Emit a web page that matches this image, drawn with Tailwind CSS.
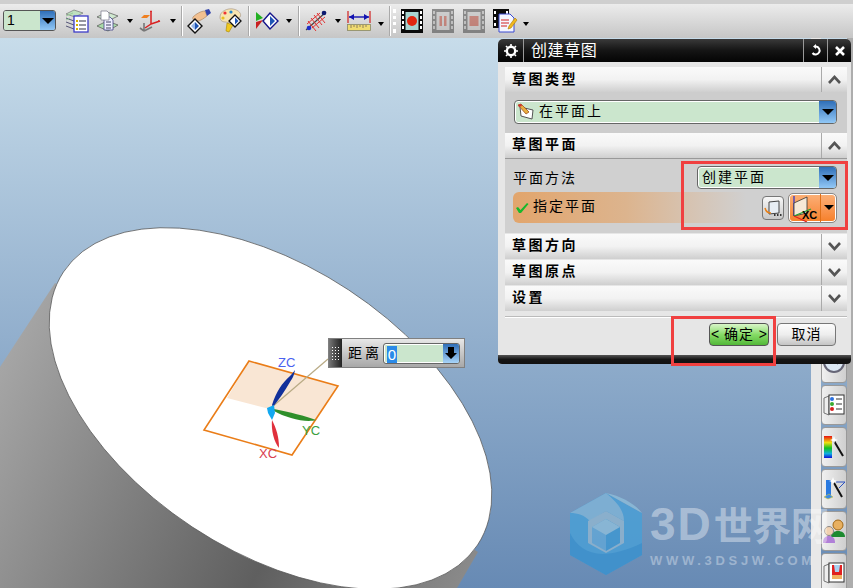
<!DOCTYPE html>
<html lang="zh-CN">
<head>
    <meta charset="UTF-8">
    <meta name="viewport" content="width=device-width, initial-scale=1.0">
    <title>创建草图</title>
    <script src="https://cdn.jsdelivr.net/npm/@tailwindcss/browser@4"></script>
</head>
<body class="w-[853px] h-[588px] overflow-hidden flex flex-col relative bg-[#c8c8c8] font-['Liberation_Sans','Noto_Sans_CJK_SC',sans-serif] text-[14px] text-black">

    <!-- top toolbar -->
    <div class="h-[38px] shrink-0 border-t-[4px] border-[#cfcfcf] bg-linear-to-b from-[#ececec] to-[#c6c6c6] flex items-center pl-[3px] pb-[1px]">
        <div class="w-[53px] h-[21px] rounded-[3px] border border-[#555] flex overflow-hidden">
            <div class="w-[36px] bg-[#cbe6cd] pl-[3px] text-[14px] leading-[19px]">1</div>
            <div class="flex-1 bg-linear-to-b from-[#2f6fb8] to-[#92c8f6] flex items-center justify-center">
                <div class="w-0 h-0 border-x-[6px] border-x-transparent border-t-[6px] border-t-black"></div>
            </div>
        </div>
        <svg class="ml-[9px]" width="24" height="24" viewBox="0 0 24 24"><path d="M1 5 9 1l9 3-8 4z" fill="#bfe0bf" stroke="#666" stroke-width=".6"/><path d="M1 9l8 3M1 13l8 3M1 17l8 3" stroke="#557" fill="none"/><path d="M1 7l7-3M1 11l4-2" stroke="#9c9" fill="none"/><rect x="9" y="7" width="14" height="16" fill="#fff" stroke="#3c3cc8" stroke-width="1.3"/><path d="M11 11h2v2h-2zM11 15h2v2h-2zM11 19h2v2h-2z" fill="#d6b000"/><path d="M14 12h7M14 16h7M14 20h7" stroke="#334" stroke-width="1.2"/></svg>
        <svg class="ml-[7px]" width="24" height="24" viewBox="0 0 24 24"><path d="M1 8 11 3l11 4-10 5z" fill="#cfe8cf" stroke="#555" stroke-width=".7"/><path d="M1 17l10-5 11 4-10 6z" fill="#a9dba9" stroke="#555" stroke-width=".7"/><path d="M8 8h6l3 3v10H8z" fill="#eef" stroke="#448" stroke-width=".8"/><path d="M5 2h6l2 2v7H5z" fill="#fff" stroke="#778" stroke-width=".7"/><path d="M10 13h5M10 16h5M10 19h5" stroke="#446"/></svg>
        <div class="ml-[7px] w-0 h-0 border-x-[3px] border-x-transparent border-t-[4px] border-t-black"></div>
        <svg class="ml-[5px]" width="24" height="24" viewBox="0 0 24 24"><path d="M6 14v8M6 22l8-4M6 22l-4-3" stroke="#777" stroke-width="1.6" fill="none"/><path d="M13 2v13M13 15l9-3M13 15l-6 4" stroke="#d92020" stroke-width="1.5" fill="none"/><path d="M3 9l3-3h6l-3 3z" fill="#f08020"/><path d="M12 3l1-2 1 2zM20 11l2 1-2 1z" fill="#d92020"/></svg>
        <div class="ml-[8px] w-0 h-0 border-x-[3px] border-x-transparent border-t-[4px] border-t-black"></div>
        <div class="ml-[5px] w-[2px] h-[30px] border-l border-[#aaa] bg-white"></div>
        <svg class="ml-[4px]" width="25" height="26" viewBox="0 0 25 26"><path d="M6 9c3-3 8-6 12-6l2 5c-3 2-6 5-10 5-3 0-5-2-4-4z" fill="#f2c090" stroke="#a86" stroke-width=".7"/><path d="M18 2l4-1 2 4-4 3z" fill="#3344aa"/><path d="M8 11l7 7-7 7-7-7z" fill="#fff" stroke="#111" stroke-width="1.4"/><path d="M8 14l4 4-4 4z" fill="#1d55b5"/><path d="M8 14l-4 4 4 4z" fill="#9ab8e8"/></svg>
        <svg class="ml-[6px]" width="25" height="25" viewBox="0 0 25 25"><path d="M2 9C2 3 10 0 15 1c6 1 9 5 7 8-2 2-6 1-7 3-1 3-4 3-7 2-3 0-6-1-6-5z" fill="#f7e5b0" stroke="#a98" stroke-width=".7"/><circle cx="7" cy="5" r="1.6" fill="#e33"/><circle cx="13" cy="4" r="1.6" fill="#28c"/><circle cx="5" cy="10" r="1.6" fill="#e8c020"/><path d="M9 15l6 2-4 7-3-1z" fill="#f0c820" stroke="#a80" stroke-width=".6"/><path d="M17 7l6 6-6 6-6-6z" fill="#fff" stroke="#111" stroke-width="1.3"/><path d="M17 9.500l3.500 3.500-3.500 3.500z" fill="#1d55b5"/></svg>
        <div class="ml-[5px] w-[2px] h-[30px] border-l border-[#aaa] bg-white"></div>
        <svg class="ml-[5px]" width="24" height="20" viewBox="0 0 24 20"><path d="M1 1l7 6-7 3z" fill="#22b022"/><path d="M1 11l7-2-7 9z" fill="#c82020"/><path d="M15 2l8 8-8 8-7-8z" fill="#fff" stroke="#12128a" stroke-width="1.400"/><path d="M15 5l5 5-5 5z" fill="#1d55b5"/></svg>
        <div class="ml-[7px] w-0 h-0 border-x-[3px] border-x-transparent border-t-[4px] border-t-black"></div>
        <div class="ml-[6px] w-[2px] h-[30px] border-l border-[#aaa] bg-white"></div>
        <svg class="ml-[4px]" width="24" height="24" viewBox="0 0 24 24"><path d="M2 21 22 3" stroke="#444" stroke-width="1.200"/><path d="M7 9l8 10M10 6l8 10M13 4l8 10M4 12l8 10M3 15 16 4M8 19 21 8" stroke="#e02020" stroke-width=".9"/><circle cx="5" cy="19" r="2.300" fill="#1d2cc8"/><circle cx="20" cy="4" r="2.300" fill="#0c1a70"/></svg>
        <div class="ml-[7px] w-0 h-0 border-x-[3px] border-x-transparent border-t-[4px] border-t-black"></div>
        <svg class="ml-[6px]" width="24" height="24" viewBox="0 0 24 24"><path d="M1 2v12M23 2v12" stroke="#d02020" stroke-width="1.200"/><path d="M2 8h20" stroke="#1212b0" stroke-width="1.400"/><path d="M2 8l5-3v6zM22 8l-5-3v6z" fill="#1212b0"/><rect x=".5" y="15.500" width="23" height="6" fill="#f0dc70" stroke="#886" stroke-width=".8"/><path d="M4 16v3M7 16v2M10 16v3M13 16v2M16 16v3M19 16v2" stroke="#765" stroke-width=".8"/></svg>
        <div class="ml-[7px] mt-[6px] w-0 h-0 border-x-[3px] border-x-transparent border-t-[4px] border-t-black"></div>
        <div class="ml-[5px] w-[2px] h-[30px] border-l border-[#aaa] bg-white"></div>
        <div class="ml-[2px] w-[3px] h-[24px] border-l-[3px] border-dotted border-white"></div>
        <svg class="ml-[5px]" width="22" height="24" viewBox="0 0 22 24"><rect width="22" height="24" fill="#0a0a0a"/><path d="M1 2h2v3H1zM1 7h2v3H1zM1 12h2v3H1zM1 17h2v3H1zM19 2h2v3h-2zM19 7h2v3h-2zM19 12h2v3h-2zM19 17h2v3h-2z" fill="#fff"/><rect x="4.500" y="3" width="13" height="18" fill="#a8d4d0"/><circle cx="11" cy="12" r="5" fill="#e02810"/></svg>
        <svg class="ml-[9px] opacity-55" width="22" height="24" viewBox="0 0 22 24"><rect width="22" height="24" fill="#444"/><path d="M1 2h2v3H1zM1 7h2v3H1zM1 12h2v3H1zM1 17h2v3H1zM19 2h2v3h-2zM19 7h2v3h-2zM19 12h2v3h-2zM19 17h2v3h-2z" fill="#aaa"/><rect x="4.500" y="3" width="13" height="18" fill="#bbb"/><path d="M7.500 7h2.500v10H7.500zM12 7h2.500v10H12z" fill="#b04030"/></svg>
        <svg class="ml-[9px] opacity-55" width="22" height="24" viewBox="0 0 22 24"><rect width="22" height="24" fill="#444"/><path d="M1 2h2v3H1zM1 7h2v3H1zM1 12h2v3H1zM1 17h2v3H1zM19 2h2v3h-2zM19 7h2v3h-2zM19 12h2v3h-2zM19 17h2v3h-2z" fill="#aaa"/><rect x="4.500" y="3" width="13" height="18" fill="#bbb"/><rect x="6.500" y="7" width="9" height="10" fill="#b04030"/></svg>
        <svg class="ml-[8px]" width="25" height="24" viewBox="0 0 25 24"><rect width="16" height="19" fill="#0a0a0a"/><path d="M1 2h2v3H1zM1 8h2v3H1zM1 14h2v3H1zM13 2h2v3h-2z" fill="#fff"/><path d="M6 5h11l4 4v14H6z" fill="#f4f6ff" stroke="#3a4ad0"/><path d="M8 11h8M8 14h8M8 17h6" stroke="#d02020" stroke-width="1.100"/><path d="M16 17l6-8 2 2-6 8-3 1z" fill="#f0b820" stroke="#a70" stroke-width=".6"/></svg>
        <div class="ml-[5px] mt-[6px] w-0 h-0 border-x-[3px] border-x-transparent border-t-[4px] border-t-black"></div>
    </div>

    <!-- graphics window -->
    <div class="relative flex-1 bg-linear-to-b from-[#c7dcea] to-[#678ab4]">
        <svg class="absolute inset-0" width="853" height="550" viewBox="0 38 853 550">
            <defs>
                <linearGradient id="cyl" gradientUnits="userSpaceOnUse" x1="0" y1="360" x2="470" y2="590">
                    <stop offset="0" stop-color="#a6a6a6"/>
                    <stop offset=".62" stop-color="#5f5f5f"/>
                    <stop offset="1" stop-color="#8c8c8c"/>
                </linearGradient>
            </defs>
            <path d="M55 283 0 367V588H457L478 552Z" fill="url(#cyl)"/>
            <ellipse cx="270.500" cy="408.500" rx="248" ry="142" transform="rotate(33.400 270.500 408.500)" fill="#fff" stroke="#555" stroke-width=".7"/>
            <path d="M249 361 338 386 316 421 227 398Z" fill="#f9e6d4"/>
            <path d="M249 361 338 386 292 455 204 430Z" fill="none" stroke="#ea7d18" stroke-width="1.600"/>
            <path d="M272 407 328 359" stroke="#b9ab85" stroke-width="1.200"/>
            <path d="M272 405C276 392 282 383 290 376 293 373 294 371 295 370 294 376 292 379 290 382 285 391 279 399 273 407Z" fill="#12309a"/>
            <path d="M274 409C290 412 305 416 316 420 306 423 286 418 274 411Z" fill="#2f8f2a"/>
            <path d="M272 420C276 428 279 436 279 448 274 442 271 430 272 420Z" fill="#e0303c"/>
            <path d="M267 408 274 405 275 413 272 420 268 413Z" fill="#12a8f0"/>
            <text x="278" y="367" font-size="13" fill="#4a62f0" font-family="Liberation Sans">ZC</text>
            <text x="302" y="435" font-size="13" fill="#3aa040" font-family="Liberation Sans">YC</text>
            <text x="259" y="458" font-size="13" fill="#d84050" font-family="Liberation Sans">XC</text>
        </svg>

        <!-- side resource bar -->
        <div class="absolute left-[811px] top-0 w-[42px] h-full flex">
            <div class="w-[10px] bg-[#e8e8e8]"></div>
            <div class="w-[26px] flex flex-col justify-end gap-[2px]">
                <div class="h-[40px] shrink-0 rounded-[4px] border border-[#999] bg-linear-to-r from-[#f0f0f0] to-[#cfcfcf] flex items-end justify-center pb-[9px]">
                    <svg width="22" height="22" viewBox="0 0 22 22"><circle cx="11" cy="11" r="10" fill="#dce8f4" stroke="#667" stroke-width="2"/><path d="M11 5v6l4 2" stroke="#446" fill="none"/></svg>
                </div>
                <div class="h-[40px] shrink-0 rounded-[4px] border border-[#999] bg-linear-to-r from-[#f0f0f0] to-[#cfcfcf] flex items-center justify-center">
                    <svg width="22" height="24" viewBox="0 0 22 24"><path d="M1 5l5-2v19l-5-2z" fill="#eee" stroke="#777"/><rect x="6" y="2" width="15" height="19" fill="#fff" stroke="#333"/><circle cx="9" cy="6" r="2" fill="#2a70e0"/><circle cx="9" cy="11" r="2" fill="#3aaa30"/><circle cx="9" cy="16" r="2" fill="#d82020"/><path d="M13 6h6M13 11h6M13 16h6" stroke="#333"/></svg>
                </div>
                <div class="h-[40px] shrink-0 rounded-[4px] border border-[#999] bg-linear-to-r from-[#f0f0f0] to-[#cfcfcf] flex items-center justify-center">
                    <svg width="22" height="26" viewBox="0 0 22 26"><defs><linearGradient id="rb" x1="0" y1="0" x2="0" y2="1"><stop offset="0" stop-color="#e81010"/><stop offset=".3" stop-color="#f0e010"/><stop offset=".55" stop-color="#10c020"/><stop offset=".8" stop-color="#10b0e0"/><stop offset="1" stop-color="#1010d8"/></linearGradient></defs><rect x="1" y="2" width="8" height="22" fill="url(#rb)"/><path d="M11 7l9 15" stroke="#111" stroke-width="2"/><path d="M11 2l1 3 3 1-3 1-1 3-1-3-3-1 3-1z" fill="#fff"/></svg>
                </div>
                <div class="h-[40px] shrink-0 rounded-[4px] border border-[#999] bg-linear-to-r from-[#f0f0f0] to-[#cfcfcf] flex items-center justify-center">
                    <svg width="24" height="26" viewBox="0 0 24 26"><path d="M4 4h5v17H4z" fill="#2a7ae0"/><path d="M2 21l5-3 4 3-5 2z" fill="#3a8ae8" stroke="#d8c830" stroke-width=".6"/><path d="M14 6h9l-6 6" fill="none" stroke="#2a50c0"/><path d="M12 7l8 14" stroke="#111" stroke-width="2"/><path d="M11 1l1 3 3 1-3 1-1 3-1-3-3-1 3-1z" fill="#fff"/></svg>
                </div>
                <div class="h-[40px] shrink-0 rounded-[4px] border border-[#999] bg-linear-to-r from-[#f0f0f0] to-[#cfcfcf] flex items-center justify-center">
                    <svg width="24" height="26" viewBox="0 0 24 26"><circle cx="16" cy="7" r="5" fill="#e8b060" stroke="#a06818" stroke-width="1"/><path d="M9 19c0-4 3-6 7-6s7 2 7 6z" fill="#1c8a30"/><circle cx="7" cy="13" r="4.500" fill="#f0d0b0" stroke="#888"/><path d="M1 25c0-5 2-7 6-7s6 2 6 7z" fill="#b080d8"/></svg>
                </div>
                <div class="h-[35px] shrink-0 rounded-t-[4px] border border-b-0 border-[#999] bg-linear-to-r from-[#f0f0f0] to-[#cfcfcf] flex items-start pt-[7px] justify-center">
                    <svg width="22" height="24" viewBox="0 0 22 24"><path d="M1 5l5-2v19l-5-2z" fill="#eee" stroke="#777"/><rect x="6" y="2" width="15" height="19" fill="#fff" stroke="#333"/><rect x="9" y="4" width="10" height="11" fill="#e02020"/><path d="M11 4h6l-1 7h-4z" fill="#a8d0f0"/><rect x="9" y="14" width="10" height="4" fill="#f0b060"/></svg>
                </div>
            </div>
            <div class="flex-1 bg-[#adadad]"></div>
        </div>

        <!-- watermark -->
        <div class="absolute left-[570px] top-[455px] flex items-start gap-[8px] pointer-events-none">
            <svg width="72" height="82" viewBox="0 0 72 82" class="opacity-85"><path d="M36 0 72 20V62L36 82 0 62V20Z" fill="#4a9fd6"/><path d="M36 0 72 20C66 12 52 3 36 0Z" fill="#8dbcd9"/><path d="M0 20 36 0C48 10 54 18 54 28L36 18 20 28C14 22 8 20 0 20Z" fill="#7fb3d6"/><path d="M36 18 54 28V50L36 60 18 50V28Z" fill="#8fb4cf"/><path d="M36 26 50 34V50L36 58Z" fill="#3f97d1"/><path d="M36 26 22 34V50L36 58Z" fill="#62a6d6"/><path d="M22 34 36 26 50 34 36 42Z" fill="#8dbcd9"/><path d="M0 40C10 60 30 70 72 50V62L36 82 0 62Z" fill="#3a92cf"/></svg>
            <div class="flex flex-col pt-[6px]">
                <div class="text-white/40 font-bold leading-[50px] whitespace-nowrap flex items-baseline"><span class="text-[46px] tracking-[2px]">3D</span><span class="text-[39px] tracking-[-.5px] ml-[1px]">世界网</span></div>
                <div class="text-white/35 font-bold text-[13px] leading-[14px] mt-[2px] tracking-[3.700px] whitespace-nowrap">WWW.3DSJW.COM</div>
            </div>
        </div>

        <!-- distance input -->
        <div class="absolute left-[328px] top-[300px] w-[137px] h-[30px] border border-[#808080] bg-linear-to-b from-[#e8e8e8] to-[#a8a8a8] flex items-center">
            <div class="w-[13px] h-full bg-linear-to-r from-[#777] to-[#222] grid grid-cols-3 content-center justify-items-center gap-y-[2px] px-[2px]">
                <i class="w-[1px] h-[1px] bg-white"></i><i class="w-[1px] h-[1px] bg-white"></i><i class="w-[1px] h-[1px] bg-white"></i>
                <i class="w-[1px] h-[1px] bg-white"></i><i class="w-[1px] h-[1px] bg-white"></i><i class="w-[1px] h-[1px] bg-white"></i>
                <i class="w-[1px] h-[1px] bg-white"></i><i class="w-[1px] h-[1px] bg-white"></i><i class="w-[1px] h-[1px] bg-white"></i>
                <i class="w-[1px] h-[1px] bg-white"></i><i class="w-[1px] h-[1px] bg-white"></i><i class="w-[1px] h-[1px] bg-white"></i>
                <i class="w-[1px] h-[1px] bg-white"></i><i class="w-[1px] h-[1px] bg-white"></i><i class="w-[1px] h-[1px] bg-white"></i>
            </div>
            <span class="ml-[6px] tracking-[3px] whitespace-nowrap">距离</span>
            <div class="ml-[1px] w-[77px] h-[21px] rounded-[3px] border border-[#666] ring-1 ring-inset ring-white flex overflow-hidden bg-[#cbe6cd]">
                <div class="flex-1 pl-[3px] pt-[1px]"><span class="inline-block w-[10px] h-[18px] bg-[#2a8ae8] text-white leading-[18px] text-[15px] text-center">0</span></div>
                <div class="w-[16px] bg-linear-to-b from-[#2f6fb8] to-[#a8d4f8] flex items-center justify-center">
                    <svg width="12" height="12" viewBox="0 0 12 12"><path d="M3 0h6v6h3l-6 6-6-6h3z" fill="#000"/></svg>
                </div>
            </div>
        </div>
    </div>

    <!-- create sketch dialog -->
    <div class="absolute left-[498px] top-[39px] w-[353px] h-[325px] flex flex-col bg-[#e6e6e6] rounded-t-[5px] rounded-b-[4px] overflow-hidden">
        <div class="h-[23px] shrink-0 bg-linear-to-b from-[#3a3a3a] via-[#151515] to-[#050505] flex items-center text-white">
            <div class="w-[26px] flex justify-center border-r border-[#999] h-full items-center">
                <svg width="14" height="14" viewBox="0 0 14 14"><circle cx="7" cy="7" r="4.200" fill="none" stroke="#fff" stroke-width="2.400"/><path d="M7 0v2M7 12v2M0 7h2M12 7h2M2 2l1.500 1.500M10.500 10.500 12 12M2 12l1.500-1.500M10.500 3.500 12 2" stroke="#fff" stroke-width="1.600"/></svg>
            </div>
            <span class="ml-[7px] text-[16px] tracking-[.6px] leading-none">创建草图</span>
            <div class="ml-auto w-[25px] h-full border-x border-[#999] flex items-center justify-center">
                <svg width="13" height="13" viewBox="0 0 13 13"><path d="M7 2.500a4 4 0 1 1-3.500 6.500" fill="none" stroke="#fff" stroke-width="2"/><path d="M7 0v5l-3-2.500z" fill="#fff"/></svg>
            </div>
            <div class="w-[23px] h-full flex items-center justify-center">
                <svg width="12" height="12" viewBox="0 0 12 12"><path d="M2 2l8 8M10 2l-8 8" stroke="#fff" stroke-width="2.600"/></svg>
            </div>
        </div>

        <div class="flex-1 pl-[7px] pr-[4px] pt-[5px]">
            <div class="h-[25px] flex bg-linear-to-b from-[#fafafa] via-[#f2f2f2] to-[#cfcfcf]">
                <div class="flex-1 pl-[7px] font-bold tracking-[2.500px] leading-[24px]">草图类型</div>
                <div class="w-[26px] border-l border-[#aaa] flex items-center justify-center">
                    <svg width="13" height="9" viewBox="0 0 13 9"><path d="M1 8l5.500-6L12 8" fill="none" stroke="#555" stroke-width="2.600"/></svg>
                </div>
            </div>
            <div class="h-[41px] bg-[#cdcdcd] pl-[9px] pr-[10px] pt-[8px]">
                <div class="h-[24px] rounded-[4px] border border-[#666] ring-1 ring-inset ring-white flex overflow-hidden bg-[#cbe6cd]">
                    <div class="flex-1 flex items-center pl-[2px]">
                        <svg width="18" height="18" viewBox="0 0 18 18"><path d="M3 4l13 3-1 9-11-3z" fill="#fff" stroke="#555"/><path d="M1 2l3-1 8 8-3 2z" fill="#e8b040" stroke="#a05020" stroke-width=".8"/><path d="M1 2l3-1 1 2-3 1z" fill="#d03030"/></svg>
                        <span class="ml-[4px] tracking-[2px] leading-none pb-[2px]">在平面上</span>
                    </div>
                    <div class="w-[17px] bg-linear-to-b from-[#2f6fb8] to-[#92c8f6] flex items-center justify-center">
                        <div class="w-0 h-0 border-x-[6px] border-x-transparent border-t-[6px] border-t-black"></div>
                    </div>
                </div>
            </div>
            <div class="h-[25px] flex bg-linear-to-b from-[#fafafa] via-[#f2f2f2] to-[#cfcfcf]">
                <div class="flex-1 pl-[7px] font-bold tracking-[2.500px] leading-[23px]">草图平面</div>
                <div class="w-[26px] border-l border-[#aaa] flex items-center justify-center">
                    <svg width="13" height="9" viewBox="0 0 13 9"><path d="M1 8l5.500-6L12 8" fill="none" stroke="#555" stroke-width="2.600"/></svg>
                </div>
            </div>
            <div class="h-[75px] bg-[#d0d0d0] border-t border-[#999] pl-[8px] pr-[10px] flex flex-col">
                <div class="flex items-center h-[33px] pt-[4px] shrink-0">
                    <span class="tracking-[2px] leading-none">平面方法</span>
                    <div class="ml-auto w-[140px] h-[23px] rounded-[4px] border border-[#666] ring-1 ring-inset ring-white flex overflow-hidden bg-[#cbe6cd]">
                        <div class="flex-1 pl-[4px] tracking-[2px] leading-[20px]">创建平面</div>
                        <div class="w-[17px] bg-linear-to-b from-[#2f6fb8] to-[#92c8f6] flex items-center justify-center">
                            <div class="w-0 h-0 border-x-[6px] border-x-transparent border-t-[6px] border-t-black"></div>
                        </div>
                    </div>
                </div>
                <div class="h-[31px] flex items-center rounded-l-[6px] bg-linear-to-r from-[#e2a56c] via-[#dcb48e] via-35% to-[#d0d0d0] to-[72%] pl-[2px]">
                    <svg width="14" height="12" viewBox="0 0 14 12"><path d="M1 6l2-1 2.500 3L12 1l1.500 1L6 11H4z" fill="#18b82c"/></svg>
                    <span class="ml-[4px] tracking-[2px] leading-none pb-[3px]">指定平面</span>
                    <div class="ml-auto w-[22px] h-[24px] rounded-[4px] border border-[#777] bg-linear-to-b from-[#f8f8f8] to-[#c8c8c8] flex items-center justify-center">
                        <svg width="18" height="18" viewBox="0 0 18 18"><path d="M5 3l10-1v12l-10 1z" fill="#e8eef4" stroke="#444"/><path d="M1 9c1 4 3 5 6 5" fill="none" stroke="#e88018" stroke-width="1.500"/><path d="M10 16h1.500M13 16h1.500M16 16h1.500" stroke="#000" stroke-width="1.500"/></svg>
                    </div>
                    <div class="ml-[4px] w-[49px] h-[30px] rounded-[5px] border border-[#888] ring-1 ring-inset ring-white flex overflow-hidden bg-linear-to-b from-[#fbb077] to-[#f67f25]">
                        <div class="flex-1 border-r border-[#e07018] relative">
                            <svg class="absolute inset-0" width="32" height="28" viewBox="0 0 32 28"><path d="M5 22V2" stroke="#2030d0" stroke-width="1.200"/><path d="M5 9 18 3V19L5 22Z" fill="#f6e8d8" stroke="#333" stroke-width=".8"/><path d="M5 22 22 15" stroke="#20a030" stroke-width="1.200"/><path d="M5 22 18 28" stroke="#e02020" stroke-width="1.200"/><text x="13" y="25" font-size="11" font-weight="bold" font-family="Liberation Sans" fill="#000">XC</text></svg>
                        </div>
                        <div class="w-[15px] flex items-center justify-center">
                            <div class="w-0 h-0 border-x-[5px] border-x-transparent border-t-[5px] border-t-black"></div>
                        </div>
                    </div>
                </div>
            </div>
            <div class="h-[25px] mt-[1px] flex bg-linear-to-b from-[#fafafa] via-[#f2f2f2] to-[#cfcfcf]">
                <div class="flex-1 pl-[7px] font-bold tracking-[2.500px] leading-[23px]">草图方向</div>
                <div class="w-[26px] border-l border-[#aaa] flex items-center justify-center">
                    <svg width="13" height="9" viewBox="0 0 13 9"><path d="M1 1l5.500 6L12 1" fill="none" stroke="#555" stroke-width="2.600"/></svg>
                </div>
            </div>
            <div class="h-[25px] mt-[1px] flex bg-linear-to-b from-[#fafafa] via-[#f2f2f2] to-[#cfcfcf]">
                <div class="flex-1 pl-[7px] font-bold tracking-[2.500px] leading-[23px]">草图原点</div>
                <div class="w-[26px] border-l border-[#aaa] flex items-center justify-center">
                    <svg width="13" height="9" viewBox="0 0 13 9"><path d="M1 1l5.500 6L12 1" fill="none" stroke="#555" stroke-width="2.600"/></svg>
                </div>
            </div>
            <div class="h-[25px] mt-[1px] flex bg-linear-to-b from-[#fafafa] via-[#f2f2f2] to-[#cfcfcf]">
                <div class="flex-1 pl-[7px] font-bold tracking-[2.500px] leading-[23px]">设置</div>
                <div class="w-[26px] border-l border-[#aaa] flex items-center justify-center">
                    <svg width="13" height="9" viewBox="0 0 13 9"><path d="M1 1l5.500 6L12 1" fill="none" stroke="#555" stroke-width="2.600"/></svg>
                </div>
            </div>
            <div class="mt-[5px] h-[2px] border-t border-[#bbb] bg-white"></div>
            <div class="mt-[5px] flex justify-end pr-[11px] gap-[8px]">
                <div class="w-[60px] h-[23px] rounded-[4px] border border-[#555] bg-linear-to-b from-[#d8f5c8] via-[#86dc66] to-[#52b838] flex items-center justify-between px-[1px] whitespace-nowrap"><span>&lt;</span><span class="tracking-[1px]">确定</span><span>&gt;</span></div>
                <div class="w-[59px] h-[23px] rounded-[4px] border border-[#777] bg-linear-to-b from-[#fcfcfc] via-[#eeeeee] to-[#c4c4c4] flex items-center justify-center tracking-[1px]">取消</div>
            </div>
        </div>
        <div class="h-[9px] shrink-0 bg-linear-to-b from-[#555] via-[#151515] to-[#111]"></div>
    </div>

    <!-- red annotation boxes -->
    <div class="absolute left-[681px] top-[161px] w-[167px] h-[69px] border-[3px] border-[#f04040]"></div>
    <div class="absolute left-[671px] top-[316px] w-[105px] h-[50px] border-[3px] border-[#f04040]"></div>
</body>
</html>
